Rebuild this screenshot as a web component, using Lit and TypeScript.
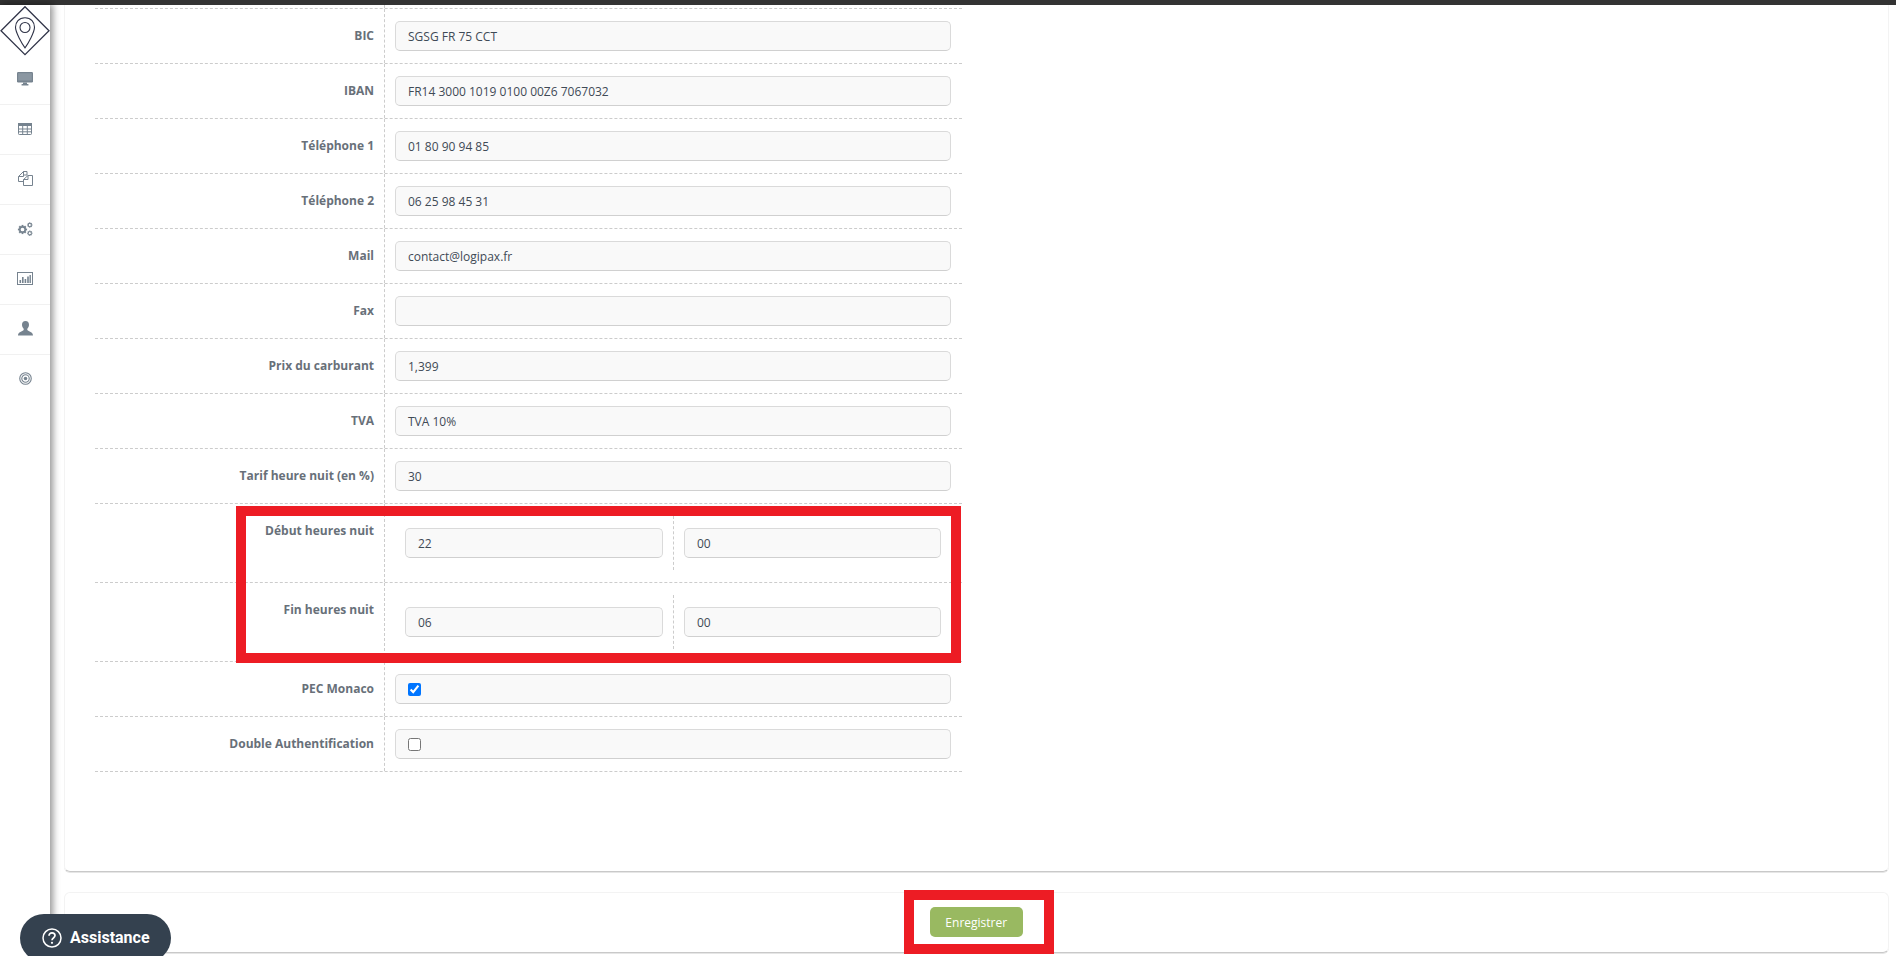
import { LitElement, html, css, svg } from "lit";
import { customElement } from "lit/decorators.js";

const gear = (cx: number, cy: number, r: number) => {
  const teeth = [0, 45, 90, 135].map(
    (a) => svg`<line x1=${cx} y1=${cy - r * 1.35} x2=${cx} y2=${cy + r * 1.35} transform="rotate(${a} ${cx} ${cy})" stroke-width=${r * 0.55} />`
  );
  return svg`<g stroke="#76838f" fill="none">${teeth}<circle cx=${cx} cy=${cy} r=${r * 0.8} stroke-width=${r * 0.5} fill="#fff" /></g>`;
};

const icons = [
  svg`<svg viewBox="0 0 16 14" width="16" height="14"><rect x="0" y="0" width="16" height="10.5" rx="1.2" fill="#76838f"/><rect x="1.2" y="1.2" width="13.600" height="7.300" fill="#8b97a2"/><rect x="6" y="10.5" width="4" height="1.8" fill="#76838f"/><rect x="4.5" y="12" width="7" height="1.5" rx=".5" fill="#76838f"/></svg>`,
  svg`<svg viewBox="0 0 14 12" width="14" height="12"><rect x=".5" y=".5" width="13" height="11" rx=".8" fill="#fff" stroke="#76838f"/><rect x="0" y="0" width="14" height="3" fill="#76838f"/><path d="M0 6h14M0 8.8h14M4.7 0v12M9.3 0v12" stroke="#76838f" fill="none"/></svg>`,
  svg`<svg viewBox="0 0 15 15" width="15" height="15" fill="none" stroke="#76838f" stroke-width="1"><path d="M5.5 .5H9V4H5.5ZM5.5 .5L.5 5.500V10.500H5"/><path d="M.5 5.500H5.500V.5" /><path d="M10 4.500H14.500V14.500H5.500V8.500ZM10 4.500V8.500H5.500" fill="#fff"/></svg>`,
  svg`<svg viewBox="0 0 16 14" width="16" height="14">${gear(5.5, 7.5, 3.4)}${gear(12.8, 3, 2)}${gear(12.8, 11.2, 2)}</svg>`,
  svg`<svg viewBox="0 0 16 13" width="16" height="13" fill="#76838f"><rect x=".5" y=".5" width="15" height="12" fill="#fff" stroke="#76838f"/><rect x="2.500" y="8" width="1.600" height="3"/><rect x="5" y="5" width="1.600" height="6"/><rect x="7.600" y="7" width="1.600" height="4"/><rect x="10.200" y="4.500" width="1.600" height="6.500"/><rect x="12.500" y="3" width="1.400" height="8"/></svg>`,
  svg`<svg viewBox="0 0 15 15" width="15" height="15" fill="#76838f"><path d="M7.500 0C5.200 0 4 1.700 4 3.800c0 1.700.8 3.200 1.700 4v1.200C4.400 10.300 0 11 0 14.500h15C15 11 10.600 10.300 9.300 9V7.800c.9-.8 1.700-2.300 1.700-4C11 1.700 9.800 0 7.500 0z"/></svg>`,
  svg`<svg viewBox="0 0 14 14" width="13" height="13" fill="none" stroke="#76838f" stroke-width="1.200"><circle cx="7" cy="7" r="6.200"/><circle cx="7" cy="7" r="4"/><circle cx="7" cy="7" r="1.900" fill="#76838f" stroke="none"/></svg>`,
];

const rows = [
  ["BIC", "SGSG FR 75 CCT"],
  ["IBAN", "FR14 3000 1019 0100 00Z6 7067032"],
  ["Téléphone 1", "01 80 90 94 85"],
  ["Téléphone 2", "06 25 98 45 31"],
  ["Mail", "contact@logipax.fr"],
  ["Fax", ""],
  ["Prix du carburant", "1,399"],
  ["TVA", "TVA 10%"],
  ["Tarif heure nuit (en %)", "30"],
];

@customElement("app-root")
export class AppRoot extends LitElement {
  static styles = css`
    :host {
      display: block;
      height: 956px;
      overflow: hidden;
      position: relative;
      background: #fff;
      font-family: "Open Sans", "Liberation Sans", sans-serif;
      font-size: 12px;
    }
    .topbar { height: 4.5px; background: #333; }
    .layout { display: flex; height: 951.5px; }
    .side {
      width: 50px;
      flex: none;
      background: #fff;
      box-shadow: 2px 0 7px 1px rgba(0, 0, 0, 0.42);
      position: relative;
      z-index: 1;
      display: flex;
      flex-direction: column;
    }
    .logo { height: 50px; display: flex; justify-content: center; padding-top: 1px; box-sizing: border-box; }
    .nav {
      height: 50px;
      box-sizing: border-box;
      border-top: 1px solid #f1f1f1;
      display: flex;
      align-items: center;
      justify-content: center;
      padding-bottom: 2px;
    }
    .nav.first { height: 49.5px; border-top: none; padding-bottom: 0; }
    .main {
      flex: 1;
      min-width: 0;
      padding: 0 7.5px 0 14px;
      display: flex;
      flex-direction: column;
      gap: 20px;
    }
    .card {
      height: 867.5px;
      flex: none;
      box-sizing: border-box;
      border: 1px solid #f3f3f3;
      border-top: none;
      border-bottom: 1px solid #c9c9c9;
      box-shadow: 0 1px 0 #e6e6e6;
      border-radius: 0 0 6px 6px;
      padding-left: 30px;
    }
    .foot {
      height: 60.5px;
      flex: none;
      box-sizing: border-box;
      border: 1px solid #f3f3f3;
      border-bottom: 1px solid #c9c9c9;
      box-shadow: 0 1px 0 #e6e6e6;
      border-radius: 6px;
      display: flex;
      justify-content: center;
      align-items: flex-start;
      padding: 14px 0 0 0;
    }
    .btn {
      width: 93px;
      height: 30px;
      background: #99b961;
      color: #fff;
      border-radius: 5px;
      display: flex;
      align-items: center;
      justify-content: center;
      font-size: 12px;
    }
    .form { width: 867px; }
    .stub { height: 3px; border-bottom: 1px dashed #ccc; box-sizing: content-box; display: flex; }
    .stub i { width: 289px; border-right: 1px dashed #ccc; }
    .row { display: flex; height: 55px; box-sizing: border-box; border-bottom: 1px dashed #ccc; }
    .row.tall { height: 79px; }
    .label {
      width: 290px;
      flex: none;
      box-sizing: border-box;
      border-right: 1px dashed #ccc;
      padding-right: 10px;
      text-align: right;
      font-weight: 700;
      color: #687079;
      line-height: 54px;
      white-space: nowrap;
    }
    .tall .label { line-height: 17px; padding-top: 18px; }
    .cell { flex: 1; padding: 12.5px 11.5px 0 10px; min-width: 0; }
    .input {
      height: 30px;
      box-sizing: border-box;
      background: #f9f9f9;
      border: 1px solid #dadada;
      border-bottom-color: #d0d0d0;
      border-radius: 5px;
      padding: 0 12px;
      display: flex;
      align-items: center;
      color: #3f4a56;
      font-size: 12px;
      white-space: nowrap;
    }
    .input input { margin: 0; width: 13px; height: 13px; }
    .subs { flex: 1; display: flex; padding-top: 12px; align-items: flex-start; min-width: 0; }
    .sub { height: 54px; box-sizing: border-box; padding-top: 12px; }
    .sub .input { padding-top: 1px; }
    .sub.a { width: 289px; border-right: 1px dashed #ccc; padding-left: 20px; padding-right: 10px; }
    .sub.b { flex: 1; padding-left: 10px; padding-right: 21px; }
    .mark { position: absolute; border: 10px solid #ed1c24; box-sizing: border-box; pointer-events: none; }
    .mark.m1 { left: 236px; top: 506px; width: 725px; height: 157px; }
    .mark.m2 { left: 904px; top: 890px; width: 150px; height: 64px; }
    .help {
      position: absolute;
      left: 20px;
      top: 914px;
      width: 151px;
      height: 48px;
      border-radius: 24px;
      background: #34414f;
      color: #fff;
      display: flex;
      align-items: center;
      padding: 0 0 0 22px;
      box-sizing: border-box;
      gap: 8px;
      font-family: Roboto, "Liberation Sans", sans-serif;
      font-weight: 700;
      font-size: 16px;
      z-index: 2;
    }
    .help span { padding-bottom: 2px; }
  `;

  private renderSubs(a: string, b: string) {
    return html`<div class="subs">
      <div class="sub a"><div class="input">${a}</div></div>
      <div class="sub b"><div class="input">${b}</div></div>
    </div>`;
  }

  render() {
    return html`
      <div class="topbar"></div>
      <div class="layout">
        <aside class="side">
          <div class="logo">
            <svg viewBox="0 0 50 50" width="50" height="50" fill="none" stroke="#2f3347" stroke-width="1.100">
              <path d="M25 .7L49 24.700 25 48.700 1 24.700Z" stroke-width="1.300"/>
              <path d="M25 11.800c-6.200 0-9.500 4.500-9.500 9.500 0 5 6.500 16.500 9.500 20.500 3-4 9.500-15.500 9.500-20.500 0-5-3.300-9.500-9.500-9.500z"/>
              <circle cx="25" cy="21.500" r="5"/>
            </svg>
          </div>
          ${icons.map((ic, i) => html`<div class="nav ${i === 0 ? "first" : ""}">${ic}</div>`)}
        </aside>
        <main class="main">
          <section class="card">
            <div class="form">
              <div class="stub"><i></i></div>
              ${rows.map(
                ([l, v]) => html`<div class="row">
                  <div class="label">${l}</div>
                  <div class="cell"><div class="input">${v}</div></div>
                </div>`
              )}
              <div class="row tall"><div class="label">Début heures nuit</div>${this.renderSubs("22", "00")}</div>
              <div class="row tall"><div class="label">Fin heures nuit</div>${this.renderSubs("06", "00")}</div>
              <div class="row">
                <div class="label">PEC Monaco</div>
                <div class="cell"><div class="input"><input type="checkbox" checked aria-label="PEC Monaco" /></div></div>
              </div>
              <div class="row">
                <div class="label">Double Authentification</div>
                <div class="cell"><div class="input"><input type="checkbox" aria-label="Double Authentification" /></div></div>
              </div>
            </div>
          </section>
          <section class="foot"><div class="btn">Enregistrer</div></section>
        </main>
      </div>
      <div class="mark m1"></div>
      <div class="mark m2"></div>
      <div class="help">
        <svg viewBox="0 0 20 20" width="20" height="20" fill="none" stroke="#fff" stroke-width="1.500">
          <circle cx="10" cy="10" r="9"/>
          <path d="M7 7.800c0-2 1.400-3 3-3s3 1 3 2.800c0 2.400-3 2.400-3 4.600" stroke-width="1.700"/>
          <circle cx="10" cy="14.800" r="1.100" fill="#fff" stroke="none"/>
        </svg>
        <span>Assistance</span>
      </div>
    `;
  }
}
